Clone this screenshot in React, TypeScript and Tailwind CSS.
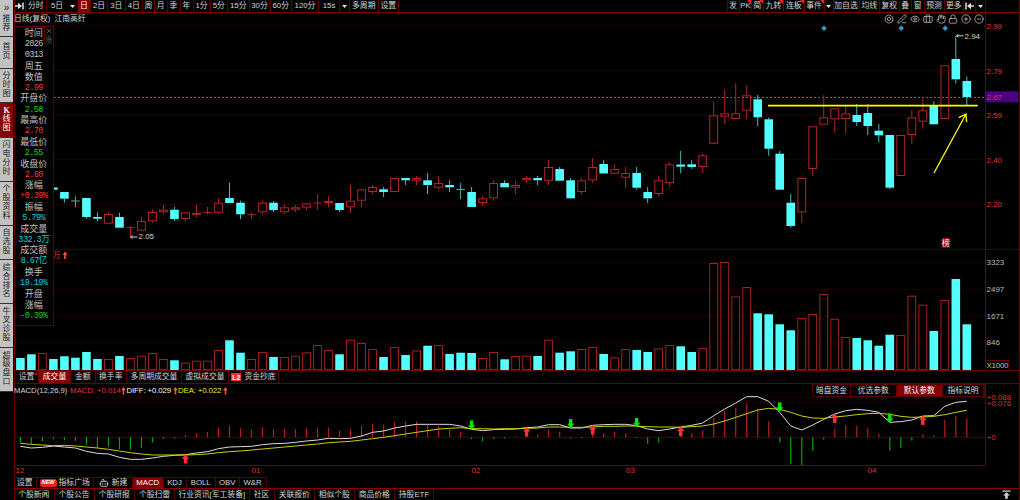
import type { ReactNode } from 'react';
import { Bolt, Bot, Briefcase, CircleMinus, CirclePlus, Eye, Hand, Lock, PenLine, Settings, X } from 'lucide-react';

type Dir = 'u' | 'd';
// direction, body top, body bottom, wick top, wick bottom
type Candle = [Dir, number, number, number, number];

// the first three sessions are hidden behind the info panel and only have volume
const hiddenDirs: Dir[] = ['d', 'd', 'u'];
const candles: Candle[] = [
  ['d', 187.5, 189.7, 187.5, 189.7], ['d', 192, 198.7, 192, 202.7], ['d', 201, 201, 196.3, 207.3],
  ['d', 198, 217, 198, 218.7], ['d', 217, 218.7, 212.3, 221.3], ['u', 214, 223.7, 212, 223.7],
  ['d', 217, 227.7, 212.7, 227.7], ['u', 227.7, 227.7, 226, 237], ['u', 221, 230.7, 217, 230.7],
  ['u', 212, 221.3, 209.3, 223], ['u', 209.7, 212.3, 205, 214], ['d', 209.7, 219, 207, 221],
  ['u', 212.3, 219, 212.3, 221], ['u', 213, 214.3, 205, 217], ['u', 212.5, 212.5, 207, 214.3],
  ['u', 202.7, 212.7, 198.3, 214.3], ['d', 198, 203, 182.7, 203], ['d', 202.7, 214.3, 200.7, 219],
  ['u', 214.7, 214.7, 212.7, 218.7], ['u', 202.7, 212.3, 200.7, 214.3], ['d', 202.7, 210, 201, 212],
  ['u', 207.3, 212.3, 205, 214], ['u', 207.3, 209.7, 205, 212], ['u', 203.3, 207.7, 203.3, 210],
  ['u', 203, 203, 194, 209.7], ['u', 201, 203, 196.3, 207.3], ['d', 203, 210, 203, 212],
  ['u', 200.7, 207.3, 185, 212.7], ['u', 189.3, 200.7, 189.3, 207.3], ['u', 187, 192, 185, 194],
  ['d', 189.3, 192, 187, 197], ['u', 178, 192, 178, 192], ['d', 178, 180.3, 178, 185],
  ['u', 178, 180.7, 176, 185], ['d', 180.3, 185, 173, 194], ['u', 183, 187.7, 176, 189.7],
  ['d', 185, 187.3, 180.3, 192], ['d', 189.5, 189.5, 183, 199], ['d', 192, 207, 187, 207],
  ['u', 198.3, 203, 196, 205.7], ['u', 183, 198.3, 180.3, 200.7], ['d', 183, 187.3, 180.3, 187.3],
  ['u', 185, 187.7, 180.3, 194], ['u', 178, 180.3, 176, 183], ['d', 178, 180.3, 176, 185],
  ['u', 167, 180.7, 160, 185], ['d', 169, 180.7, 167, 180.7], ['d', 180.3, 198.3, 178, 198.3],
  ['u', 180.3, 192, 178, 194], ['u', 167, 180.3, 158, 183], ['d', 164, 173.5, 160, 173.5],
  ['u', 169, 173.7, 164.3, 173.7], ['u', 173, 177.7, 167, 188], ['d', 173, 187.7, 167, 189.7],
  ['d', 192, 198.3, 187, 203], ['u', 180.3, 194, 176, 196.7], ['u', 164.3, 183, 162.3, 187.3],
  ['d', 164.5, 166.7, 151, 173.3], ['d', 164.3, 167, 160, 169], ['u', 155.3, 167, 153.7, 173.3],
  ['u', 115.3, 143.7, 101.3, 143.7], ['u', 113.3, 116.7, 89.7, 124.3], ['u', 113.3, 119, 83.3, 119],
  ['u', 95.3, 110.7, 85.3, 119], ['d', 99.3, 117.3, 95, 126], ['d', 119.3, 148.7, 117.3, 155.7],
  ['d', 153.7, 189.7, 151, 189.7], ['d', 202.7, 226, 194, 227.7], ['u', 178, 212.3, 178, 223],
  ['u', 126.3, 169, 126.3, 176], ['u', 117.3, 124.7, 95, 124.7], ['u', 108.3, 119.3, 108.3, 133],
  ['u', 113.3, 119, 106, 133], ['d', 115, 122, 104, 126], ['d', 113, 126, 104, 135],
  ['d', 130.7, 135.3, 124, 142.3], ['d', 135, 187.7, 135, 189.3], ['u', 135, 176, 135, 176],
  ['u', 117.3, 135, 110, 144], ['u', 110.3, 121.7, 97.3, 128.7], ['d', 106, 124.3, 101.3, 124.3],
  ['u', 65.3, 119, 65.3, 119], ['d', 59, 79.3, 35.7, 83.3], ['d', 81, 97, 76.7, 105.3],
];

const volumes = [
  358, 354.3, 353.3, 359, 356.3, 357.7, 352, 359, 359.3, 356, 358.3, 356, 353.3, 359.3, 360.3, 363, 361, 361, 350.3, 340.3,
  352.7, 359.3, 352.3, 357, 357.3, 356, 352.7, 345.3, 350.3, 354.3, 340, 343.3, 349.3, 357, 347.3, 355, 350.7, 345.7, 345.3, 354,
  352.7, 353, 358.3, 352.3, 359.3, 356.3, 356, 356, 340, 352.7, 351.3, 349.3, 347.3, 354, 357.7, 349.3, 350, 352, 348.7, 345.3,
  346.3, 352, 348.3, 263.3, 262.3, 296.7, 287.3, 313.3, 314.3, 324.3, 330.3, 318.3, 314.3, 294.3, 319, 337.3, 338, 340.3, 345.7, 334.7,
  335.3, 296, 305, 331, 300.3, 279, 324.3,
];
const volumeDir = (i: number) => hiddenDirs[i] ?? candles[i - hiddenDirs.length][0];

// MACD series are stored in thirds of a pixel
const hist = [
  -16, -20, -12, -6, -9, -11, -22, -32, -27, -36, -38, -32, -16, -5, -4, 6, 12, 16, 28, 33,
  27, 23, 30, 25, 25, 24, 27, 29, 29, 20, 24, 34, 40, 38, 46, 47, 47, 37, 34, 23,
  16, -6, -12, -5, -4, 2, 8, 9, 22, 16, -4, -3, 14, 12, 16, 12, -3, -20, -16, -2,
  5, 12, 21, 58, 78, 88, 101, 85, 48, -16, -81, -84, -41, -7, 25, 36, 34, 26, 10, -40,
  -32, -11, 9, 6, 51, 64, 55,
];
const diff = [
  229, 234, 232, 228, 231, 234, 244, 250, 252, 262, 268, 268, 264, 259, 256, 254, 249, 245, 236, 231,
  230, 229, 224, 221, 220, 217, 213, 210, 205, 206, 205, 198, 187, 183, 174, 168, 163, 163, 163, 163,
  168, 178, 182, 179, 178, 177, 173, 171, 164, 164, 174, 174, 166, 164, 163, 163, 167, 177, 182, 177,
  171, 166, 159, 137, 117, 99, 80, 80, 94, 127, 168, 180, 165, 148, 132, 122, 118, 121, 127, 157,
  155, 150, 138, 137, 109, 97, 94,
];
const dea = [
  220, 223, 225, 227, 226, 228, 231, 234, 238, 243, 248, 252, 255, 255, 255, 255, 254, 252, 248, 245,
  243, 240, 237, 234, 231, 228, 225, 222, 218, 216, 214, 210, 206, 202, 197, 192, 187, 182, 177, 175,
  173, 176, 176, 177, 176, 176, 175, 174, 171, 171, 172, 172, 171, 169, 169, 168, 168, 170, 171, 171,
  172, 170, 168, 162, 153, 142, 131, 120, 115, 118, 127, 138, 144, 145, 141, 138, 134, 131, 130, 133,
  139, 142, 141, 139, 134, 127, 121,
];
const upMarks = [[15, 454.7], [46, 427.5], [52, 425.5], [60, 427], [74, 414], [82, 416]];
const downMarks = [[41, 420.5], [50, 419], [56, 418], [69, 402.5], [79, 413.7]];

const cx = (i: number) => 20.4 + i * 11.005;
const linePoints = (data: number[]) => data.map((v, i) => `${cx(i)},${370 + v / 3}`).join(' ');

const railTabs = [
  { text: '»推荐', h: 'h-[36.5px]' },
  { text: '首页', h: 'h-[32px]' },
  { text: '分时图', h: 'h-[34.5px]' },
  { text: 'K线图', h: 'h-[34.5px]', active: true },
  { text: '闪电分时', h: 'h-[44px]' },
  { text: '个股资料', h: 'h-[44px]' },
  { text: '自选股', h: 'h-[34.5px]' },
  { text: '综合排名', h: 'h-[44px]' },
  { text: '牛叉诊股', h: 'h-[43.5px]' },
  { text: '超级盘口', h: 'h-[44.5px]' },
];

const periods = [
  { text: '日', w: 'w-[13px]', active: true },
  { text: '2日', w: 'w-[17px]' },
  { text: '3日', w: 'w-[17.5px]' },
  { text: '4日', w: 'w-[17.5px]' },
  { text: '周', w: 'w-[12px]' },
  { text: '月', w: 'w-[12.5px]' },
  { text: '季', w: 'w-[13px]' },
  { text: '年', w: 'w-[13px]' },
  { text: '1分', w: 'w-[17px]' },
  { text: '5分', w: 'w-[17.5px]' },
  { text: '15分', w: 'w-[21.5px]' },
  { text: '30分', w: 'w-[21px]' },
  { text: '60分', w: 'w-[21.5px]' },
  { text: '120分', w: 'w-[27px]' },
  { text: '15s', w: 'w-[21px]' },
];

const tools = [
  { text: '发', w: 'w-[12.5px]' },
  { text: 'PK', w: 'w-[12px]', hot: true },
  { text: '简', w: 'w-[12px]', hot: true },
  { text: '九转', w: 'w-[20px]', hot: true },
  { text: '连板', w: 'w-[20.5px]', hot: true },
  { text: '事件', w: 'w-[20px]', hot: true },
  { text: '▼', w: 'w-[9px]' },
  { text: '加自选', w: 'w-[26px]' },
  { text: '均线', w: 'w-[20.5px]' },
  { text: '复权', w: 'w-[19.5px]' },
  { text: '叠', w: 'w-[12.5px]' },
  { text: '窗', w: 'w-[12.5px]' },
  { text: '预测', w: 'w-[20px]' },
  { text: '更多', w: 'w-[19.5px]' },
];

const infoRows = [
  ['时间', 'g'], ['2026', 'n'], ['0313', 'n'], ['周五', 'g'], ['数值', 'g'], ['2.99', 'r'],
  ['开盘价', 'g'], ['2.58', 'e'], ['最高价', 'g'], ['2.70', 'r'], ['最低价', 'g'], ['2.55', 'e'],
  ['收盘价', 'g'], ['2.60', 'r'], ['涨幅', 'g'], ['+0.39%', 'r'], ['振幅', 'g'], ['5.79%', 'c'],
  ['成交量', 'g'], ['332.3万', 'c'], ['成交额', 'g'], ['8.67亿', 'c'], ['换手', 'g'], ['19.19%', 'c'],
  ['开盘', 'g'], ['涨幅', 'g'], ['-0.39%', 'e'],
];
const MONO = "font-['Liberation_Mono','Noto_Sans_CJK_SC',monospace] text-[8.6px] tracking-[-0.6px]";
const infoStyle: Record<string, string> = {
  g: 'text-[9px] text-[#c0c0c0]',
  n: `${MONO} text-[#c0c0c0]`,
  r: `${MONO} text-[#ff3434]`,
  e: `${MONO} text-[#00dc00]`,
  c: `${MONO} text-[#00d0dc]`,
};

const footerTabs = [
  { text: '个股新闻', w: 'w-[40.5px]' },
  { text: '个股公告', w: 'w-[40px]' },
  { text: '个股研报', w: 'w-[40.5px]' },
  { text: '个股扫雷', w: 'w-[40px]' },
  { text: '行业资讯[军工装备]', w: 'w-[74.5px]' },
  { text: '社区', w: 'w-[25px]' },
  { text: '关联报价', w: 'w-[40.5px]' },
  { text: '相似个股', w: 'w-[39.5px]' },
  { text: '商品价格', w: 'w-[40.5px]' },
  { text: '持股ETF', w: 'w-[39px]' },
];

function Cell({ w, active, hot, children }: { w: string; active?: boolean; hot?: boolean; children: ReactNode }) {
  return (
    <div
      className={`relative flex h-full shrink-0 items-center justify-center gap-[2px] whitespace-nowrap border-r border-[#5a0000] ${w} ${
        active ? 'bg-[#850000] text-white' : ''
      }`}
    >
      {children}
      {hot && (
        <svg className="absolute right-0 top-0" width="4" height="4">
          <path d="M0 0H4V4Z" fill="#ff2020" />
        </svg>
      )}
    </div>
  );
}

function Caret() {
  return (
    <svg width="5" height="3" viewBox="0 0 5 3">
      <path d="M0 0H5L2.5 3Z" fill="#e8e8e8" />
    </svg>
  );
}

function JumpIcon({ flip }: { flip?: boolean }) {
  return (
    <svg width="9" height="8" viewBox="0 0 9 8" className={flip ? '-scale-x-100' : ''}>
      <path d="M0 4H5M8 0.5V7.5" fill="none" stroke="#e0e0e0" strokeWidth="1.5" />
      <path d="M3 0.8L7 4L3 7.2Z" fill="#e0e0e0" />
    </svg>
  );
}

function RedArrow() {
  return (
    <svg width="5" height="8" viewBox="0 0 5 8" className="ml-[1px] mr-[0.5px] shrink-0">
      <path d="M2.5 0L4.8 3.2H3.3V7.5H1.7V3.2H0.2Z" fill="#ff5050" />
    </svg>
  );
}

function Grid({ ys }: { ys: number[] }) {
  return (
    <>
      {ys.map((y) => (
        <line key={y} x1="14" x2="985" y1={y} y2={y} stroke="#540000" strokeWidth="0.8" strokeDasharray="1 1" />
      ))}
    </>
  );
}

function CandleShape({ index, candle }: { index: number; candle: Candle }) {
  const [dir, top, bottom, high, low] = candle;
  const x = cx(index);
  const color = dir === 'u' ? '#b42626' : '#54ffff';
  if (bottom - top < 1) {
    return (
      <g stroke={dir === 'u' ? '#b02424' : '#3cb8b8'}>
        <line x1={x - 4.3} x2={x + 4.3} y1={top} y2={top} />
        <line x1={x} x2={x} y1={high} y2={low} />
      </g>
    );
  }
  return (
    <g>
      <line x1={x} x2={x} y1={high} y2={top} stroke={dir === 'u' ? color : '#40c0c0'} />
      <line x1={x} x2={x} y1={bottom} y2={low} stroke={dir === 'u' ? color : '#40c0c0'} />
      {dir === 'u' ? (
        <rect x={x - 3.9} y={top + 0.5} width="7.8" height={Math.max(bottom - top - 1, 0.8)} fill="none" stroke={color} />
      ) : (
        <rect x={x - 4.3} y={top} width="8.6" height={bottom - top} fill={color} />
      )}
    </g>
  );
}

function PriceChart() {
  const labels: [string, number][] = [['2.99', 25.7], ['2.79', 70.5], ['2.59', 115.3], ['2.40', 159.7], ['2.20', 204.3]];
  return (
    <svg width="1006" height="224" viewBox="14 25 1006 224" className="block shrink-0 overflow-visible">
      <Grid ys={labels.map(([, y]) => y)} />
      <line x1="14" x2="985" y1="97.5" y2="97.5" stroke="#00a800" strokeDasharray="2 2" />
      {candles.map((candle, i) => (
        <CandleShape key={i} index={i + hiddenDirs.length} candle={candle} />
      ))}
      {[824, 901.2, 945.2].map((x) => (
        <path key={x} d={`M${x} 25.5l2.8 2.8l-2.8 2.8l-2.8 -2.8Z`} fill="#2c9ccc" />
      ))}
      <path d="M768 105.7H977.7" stroke="#ffff00" strokeWidth="1.7" />
      <path d="M934 173L966 114M958.8 117.6L966 114L966.6 122" stroke="#ffff00" strokeWidth="1.3" fill="none" />
      <g stroke="#d0d0d0" fill="none">
        <path d="M956.5 35.8H963.5M958.5 34.3L956.5 35.8L958.5 37.3" />
        <path d="M130.5 237H137.5M132.5 235.5L130.5 237L132.5 238.5" />
      </g>
      <g fontSize="8" fill="#d4d4d4">
        <text x="964.5" y="38.5">2.94</text>
        <text x="138.5" y="239.3">2.05</text>
      </g>
      <rect x="941.5" y="238" width="8.5" height="10" fill="#8b0000" />
      <text x="945.7" y="246.4" fontSize="8" fill="#fff" textAnchor="middle">榜</text>
      <path d="M985.5 13V249" stroke="#6a0000" />
      <rect x="986" y="91.3" width="32.5" height="11" fill="#4b0082" />
      <g fontSize="8" fill="#e83434">
        {labels.map(([text, y]) => (
          <text key={text} x="986.5" y={y + 3}>{text}</text>
        ))}
        <text x="986.5" y="99.9">2.67</text>
      </g>
    </svg>
  );
}

function VolumeChart() {
  const labels: [string, number][] = [['3323', 262.4], ['2497', 289.3], ['1671', 316], ['846', 342.4]];
  return (
    <svg width="1006" height="122" viewBox="14 249 1006 122" className="block shrink-0">
      <Grid ys={labels.map(([, y]) => y)} />
      {volumes.map((top, i) =>
        volumeDir(i) === 'u' ? (
          <rect key={i} x={cx(i) - 3.9} y={top + 0.2} width="7.8" height={369.5 - top} fill="none" stroke="#a42020" />
        ) : (
          <rect key={i} x={cx(i) - 4.3} y={top} width="8.6" height={370 - top} fill="#54ffff" />
        ),
      )}
      <text x="52.5" y="258.3" fontSize="8" fill="#e03030">万</text>
      <path d="M65 251.5L67.3 254.7H65.8V259H64.2V254.7H62.7Z" fill="#ff5050" />
      <path d="M14 249H1019" stroke="#560000" strokeWidth="1.4" />
      <path d="M14 370.5H1019" stroke="#6a0000" />
      <path d="M985.5 249V370" stroke="#6a0000" />
      <rect x="985.5" y="360.5" width="23.5" height="10" fill="none" stroke="#6a0000" />
      <g fontSize="8" fill="#bcbcbc">
        {labels.map(([text, y]) => (
          <text key={text} x="986.5" y={y + 3}>{text}</text>
        ))}
        <text x="986.5" y="368" textLength="22">X1000</text>
      </g>
    </svg>
  );
}

function MacdChart() {
  const months: [string, number][] = [['12', 15.5], ['01', 251.5], ['02', 471.5], ['03', 626], ['04', 867.5]];
  return (
    <svg width="1006" height="80" viewBox="14 397 1006 80" className="block shrink-0 overflow-visible">
      <Grid ys={[397.2, 402.4]} />
      <path d="M14 437.3H985" stroke="#4a0000" />
      {hist.map((v, i) => (
        <line key={i} x1={cx(i)} x2={cx(i)} y1="437.2" y2={437.2 - v / 3} stroke={v > 0 ? '#b42020' : '#00a400'} strokeWidth="1.2" />
      ))}
      <polyline points={linePoints(diff)} fill="none" stroke="#dcdcdc" />
      <polyline points={linePoints(dea)} fill="none" stroke="#d0d000" />
      {upMarks.map(([i, y]) => (
        <path key={i} d={`M${cx(i)} ${y - 0.5}l3.6 4.6h-1.9v4.8h-3.4v-4.8h-1.9Z`} fill="#ff3030" />
      ))}
      {downMarks.map(([i, y]) => (
        <path key={i} d={`M${cx(i)} ${y + 9.3}l3.6 -4.6h-1.9v-4.8h-3.4v4.8h-1.9Z`} fill="#00e800" />
      ))}
      <path d="M14 465.5H985.5V384" stroke="#6a0000" fill="none" />
      <g fontSize="8" fill="#e03030">
        <text x="986.5" y="399.5">+0.088</text>
        <text x="986.5" y="405.5">+0.076</text>
        <text x="986.5" y="440">+0</text>
      </g>
      <g fontSize="8" fill="#e03030">
        {months.map(([text, x]) => (
          <g key={text}>
            <path d={`M${x} 465V467`} stroke="#6a0000" />
            <text x={x} y="473.3">{text}</text>
          </g>
        ))}
      </g>
    </svg>
  );
}

function InfoPanel() {
  return (
    <div className="absolute left-0 top-[12.5px] h-[300.5px] w-[39.5px] border border-[#5a0000] bg-black pt-[2px]">
      {infoRows.map(([text, kind], i) => (
        <div key={i} className={`flex h-[10.85px] items-center justify-center whitespace-nowrap ${infoStyle[kind]}`}>
          {text}
        </div>
      ))}
      <div className="absolute right-0 top-0 flex flex-col border-b border-l border-[#5a0000] text-[#777]">
        <X className="h-[8px] w-[8px]" strokeWidth={2} />
        <Settings className="h-[8px] w-[8px] border-t border-[#5a0000]" strokeWidth={2} />
      </div>
    </div>
  );
}

export default function App() {
  const chartIcons = [Bolt, PenLine, Eye, Briefcase, Hand, Lock, CirclePlus, CircleMinus];

  return (
    <div className="flex h-[500px] w-[1020px] overflow-hidden bg-black font-['Liberation_Sans','Noto_Sans_CJK_SC',sans-serif] text-[7.8px] leading-none text-[#d6d6d6]">
      {/* Side rail */}
      <nav className="flex w-[14px] shrink-0 flex-col">
        {railTabs.map((tab) => (
          <div
            key={tab.text}
            className={`flex w-[13px] shrink-0 flex-col items-center justify-center border-b border-[#333] text-[8px] leading-[8.8px] ${tab.h} ${
              tab.active ? 'bg-[#850000] text-white' : 'bg-[#c2c2c2] text-[#222]'
            }`}
          >
            {[...tab.text].map((ch) => (
              <span
                key={ch}
                className={ch === 'K' ? "font-['Liberation_Serif',serif] font-bold" : ch === '»' ? 'pb-[2px] text-[10px] leading-[11px]' : ''}
              >
                {ch}
              </span>
            ))}
          </div>
        ))}
      </nav>

      <main className="flex w-[1006px] flex-col border-l border-r border-[#6a0000]">
        {/* Period toolbar */}
        <header className="flex h-[13px] shrink-0 items-center border-b border-[#7a0000]">
          <Cell w="w-[10.5px]"><JumpIcon /></Cell>
          <Cell w="w-[21.5px]">分时</Cell>
          <div className="flex w-[20px] justify-center">5日</div>
          <div className="flex w-[11px] justify-center"><Caret /></div>
          {periods.map((p) => (
            <Cell key={p.text} w={p.w} active={p.active}>{p.text}</Cell>
          ))}
          <Cell w="w-[10px]"><Caret /></Cell>
          <Cell w="w-[28.5px]">多周期</Cell>
          <Cell w="w-[20.5px]">设置</Cell>
          <div className="ml-auto mr-[33px] flex h-full items-center border-l border-[#5a0000]">
            {tools.map((t) => (
              <Cell key={t.text} w={t.w} hot={t.hot}>{t.text === '▼' ? <Caret /> : t.text}</Cell>
            ))}
            <Cell w="w-[12px]"><JumpIcon flip /></Cell>
            <Cell w="w-[10px]"><Caret /></Cell>
          </div>
        </header>

        {/* Price and volume */}
        <section className="relative -ml-px flex h-[358px] shrink-0 flex-col">
          <div className="flex h-[12px] shrink-0 items-center">
            <span>日线(复权)</span>
            <span className="ml-[4px]">江南高纤</span>
            <div className="ml-auto mr-[35px] flex items-center gap-[2.8px] text-[#b4b4b4]">
              {chartIcons.map((Icon, i) => (
                <Icon key={i} className="h-[10px] w-[10px]" strokeWidth={2} />
              ))}
            </div>
          </div>
          <PriceChart />
          <VolumeChart />
          <InfoPanel />
        </section>

        {/* Volume tabs */}
        <div className="flex h-[13px] shrink-0 items-center border-b border-[#6a0000]">
          <Cell w="w-[24px]">
            设置
            <span className="absolute right-[1px] top-[2px] h-[2px] w-[2px] rounded-full bg-[#ff2020]" />
          </Cell>
          <Cell w="w-[32px]" active>成交量</Cell>
          <Cell w="w-[24.5px]">金额</Cell>
          <Cell w="w-[31.5px]">换手率</Cell>
          <Cell w="w-[55px]">多周期成交量</Cell>
          <Cell w="w-[47px]">虚拟成交量</Cell>
          <Cell w="w-[50px]">
            <span className="mr-[1px] bg-[#f03030] px-[1px] py-[0.5px] text-[7px] font-bold text-white">L2</span>
            资金抄底
          </Cell>
        </div>

        {/* MACD */}
        <section className="-ml-px flex h-[93px] shrink-0 flex-col">
          <div className="flex h-[13px] shrink-0 items-center whitespace-nowrap">
            <span className="w-[56px] text-[7.7px]">MACD(12,26,9)</span>
            <span className="w-[50px] tracking-[-0.05px] text-[#e83030]">MACD: +0.014</span>
            <RedArrow />
            <span className="w-[45px] tracking-[-0.1px] text-white">DIFF: +0.029</span>
            <RedArrow />
            <span className="w-[44px] tracking-[-0.1px] text-[#f0f000]">DEA: +0.022</span>
            <RedArrow />
            <div className="ml-auto mr-[34px] flex h-full border border-[#5a0000]">
              <Cell w="w-[38px]">暗盘资金</Cell>
              <Cell w="w-[45.5px]">优选参数</Cell>
              <Cell w="w-[46.5px]" active>默认参数</Cell>
              <Cell w="w-[41px]">指标说明</Cell>
            </div>
          </div>
          <MacdChart />
        </section>

        {/* Indicator tabs */}
        <div className="-ml-px flex h-[11px] shrink-0 items-center">
          <div className="flex h-full border-t border-[#5a0000]">
            <Cell w="w-[22.5px]">设置</Cell>
            <Cell w="w-[57.5px]">
              <span className="rounded-[3px] bg-[#f02020] px-[2px] py-[1px] text-[5.5px] font-bold italic text-white">NEW</span>
              指标广场
            </Cell>
            <Cell w="w-[39px]">
              <Bot className="mr-[1px] h-[10px] w-[10px]" strokeWidth={2} />
              新建
            </Cell>
            <Cell w="w-[30.5px]" active>MACD</Cell>
            <Cell w="w-[23px]">KDJ</Cell>
            <Cell w="w-[29.5px]">BOLL</Cell>
            <Cell w="w-[23.5px]">OBV</Cell>
            <Cell w="w-[27px]">W&amp;R</Cell>
          </div>
        </div>

        {/* News tabs */}
        <footer className="-ml-px flex h-[12px] shrink-0 items-center border-t border-[#8a0000]">
          {footerTabs.map((tab) => (
            <Cell key={tab.text} w={tab.w}>{tab.text}</Cell>
          ))}
          <svg className="ml-auto mr-[8px]" width="9" height="9" viewBox="0 0 9 9">
            <path d="M0.5 0.5H8.5V1.8H0.5ZM4.5 2.3L8 5.5H5.8V8.7H3.2V5.5H1Z" fill="#d0d0d0" />
          </svg>
        </footer>
      </main>
    </div>
  );
}
